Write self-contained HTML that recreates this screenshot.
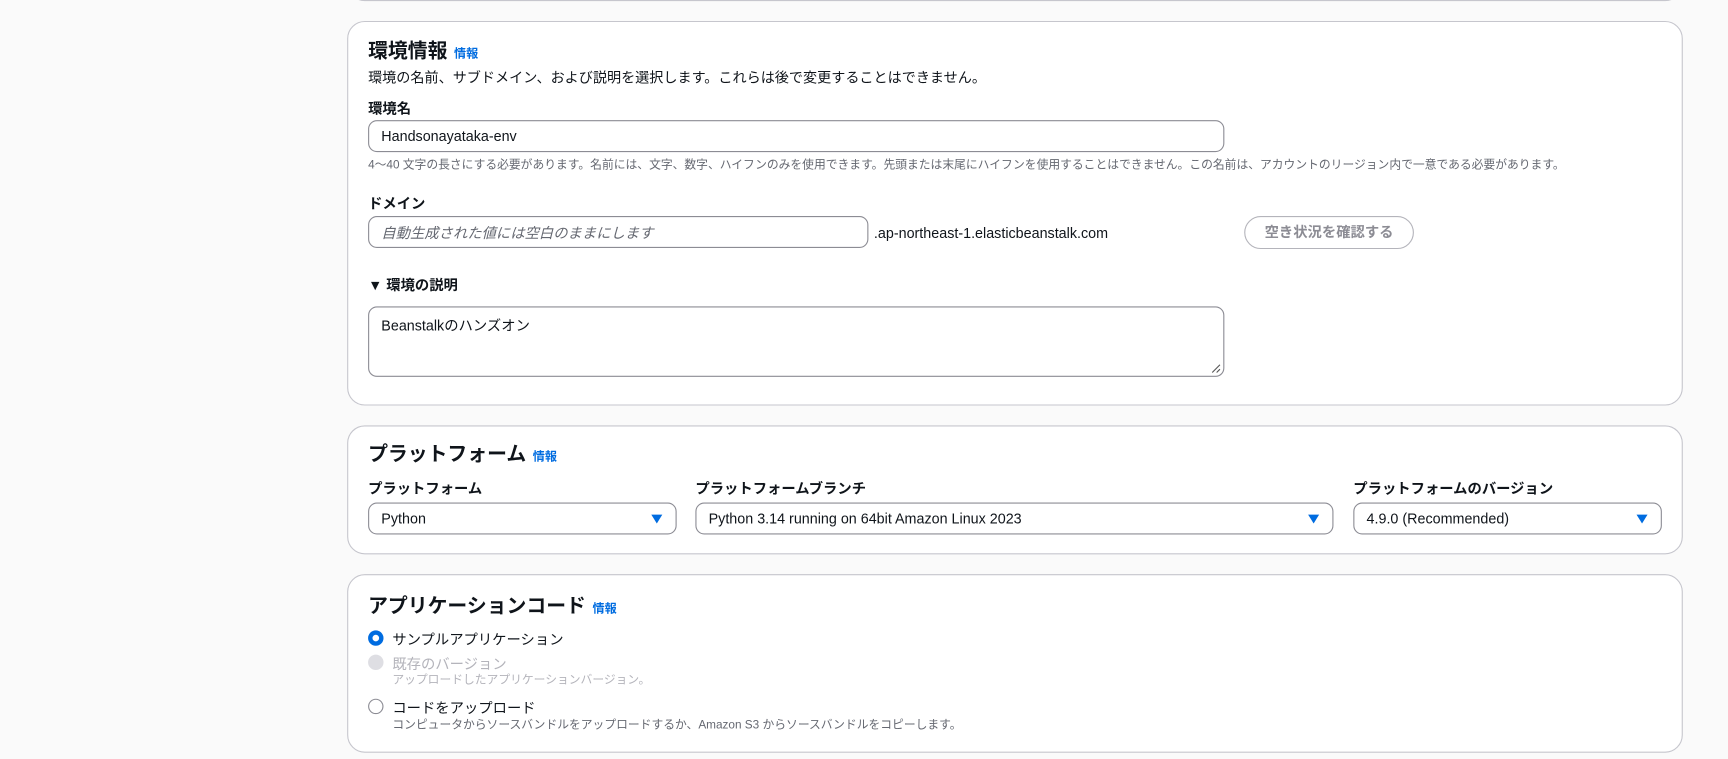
<!DOCTYPE html>
<html><head><meta charset="utf-8"><style>
body{margin:0;width:1728px;height:759px;background:#fafafa;font-family:"Liberation Sans","Noto Sans CJK JP",sans-serif;color:#0f141a;position:relative;overflow:hidden}
#w{position:absolute;left:0;top:0;width:1568px;height:689px;transform:scale(1.10204);transform-origin:0 0}
.a{position:absolute;white-space:nowrap}
.card{position:absolute;left:315px;width:1212px;background:#fff;border:1px solid #c6c6cd;border-radius:16px;box-sizing:border-box}
.h{font-size:18px;font-weight:700}
.info{font-size:11px;color:#006ce0;font-weight:700;margin-left:6px}
.lb{font-size:13px;font-weight:700}
.inp{position:absolute;border:1px solid #8c8c94;border-radius:8px;background:#fff;box-sizing:border-box;font-size:13px;padding-left:11px;display:flex;align-items:center}
.tri{position:absolute;right:12px;top:10px;width:0;height:0;border-left:5px solid transparent;border-right:5px solid transparent;border-top:8px solid #006ce0}
.sm{font-size:10.7px;color:#656871}
.rad{position:absolute;width:14px;height:14px;border-radius:50%;box-sizing:border-box}
</style></head><body><div id="w">
<div class="card" style="top:-30px;height:31px;border-radius:0 0 16px 16px"></div>
<div class="card" style="top:19px;height:349px"></div>
<div class="card" style="top:386px;height:117px"></div>
<div class="card" style="top:521px;height:162px"></div>

<div class="a h" style="left:334px;top:32px">環境情報<span class="info">情報</span></div>
<div class="a" style="left:334px;top:60px;font-size:12.8px">環境の名前、サブドメイン、および説明を選択します。これらは後で変更することはできません。</div>
<div class="a lb" style="left:334px;top:88px">環境名</div>
<div class="inp" style="left:334px;top:109px;width:777px;height:29px">Handsonayataka-env</div>
<div class="a sm" style="left:334px;top:142px">4～40 文字の長さにする必要があります。名前には、文字、数字、ハイフンのみを使用できます。先頭または末尾にハイフンを使用することはできません。この名前は、アカウントのリージョン内で一意である必要があります。</div>
<div class="a lb" style="left:334px;top:174px">ドメイン</div>
<div class="inp" style="left:334px;top:196px;width:454px;height:29px;color:#656871;font-style:italic">自動生成された値には空白のままにします</div>
<div class="a" style="left:793px;top:204px;font-size:13px">.ap-northeast-1.elasticbeanstalk.com</div>
<div class="a" style="left:1129px;top:196px;width:154px;height:30px;border:1.5px solid #b4b4bb;border-radius:16px;box-sizing:border-box;font-size:13px;font-weight:700;color:#8c8c94;text-align:center;line-height:27px">空き状況を確認する</div>
<div class="a lb" style="left:334px;top:248px">▼ 環境の説明</div>
<div class="inp" style="left:334px;top:278px;width:777px;height:64px;align-items:flex-start;padding-top:6px">Beanstalkのハンズオン
<svg style="position:absolute;right:2px;bottom:2px" width="9" height="9"><path d="M8 1L1 8M8 5L5 8" stroke="#555" stroke-width="1"/></svg></div>

<div class="a h" style="left:334px;top:398px">プラットフォーム<span class="info">情報</span></div>
<div class="a lb" style="left:334px;top:433px">プラットフォーム</div>
<div class="a lb" style="left:631px;top:433px">プラットフォームブランチ</div>
<div class="a lb" style="left:1228px;top:433px">プラットフォームのバージョン</div>
<div class="inp" style="left:334px;top:456px;width:280px;height:29px">Python<div class="tri"></div></div>
<div class="inp" style="left:631px;top:456px;width:579px;height:29px">Python 3.14 running on 64bit Amazon Linux 2023<div class="tri"></div></div>
<div class="inp" style="left:1228px;top:456px;width:280px;height:29px">4.9.0 (Recommended)<div class="tri"></div></div>

<div class="a h" style="left:334px;top:536px">アプリケーションコード<span class="info">情報</span></div>
<div class="rad" style="left:334px;top:572px;border:4px solid #006ce0;background:#fff"></div>
<div class="a" style="left:356px;top:570px;font-size:13px">サンプルアプリケーション</div>
<div class="rad" style="left:334px;top:594px;background:#dedee3"></div>
<div class="a" style="left:356px;top:592px;font-size:13px;color:#b4b4bb">既存のバージョン</div>
<div class="a sm" style="left:356px;top:609px;color:#b4b4bb">アップロードしたアプリケーションバージョン。</div>
<div class="rad" style="left:334px;top:634px;border:1px solid #8c8c94;background:#fff"></div>
<div class="a" style="left:356px;top:632px;font-size:13px">コードをアップロード</div>
<div class="a sm" style="left:356px;top:650px">コンピュータからソースバンドルをアップロードするか、Amazon S3 からソースバンドルをコピーします。</div>
</div></body></html>
